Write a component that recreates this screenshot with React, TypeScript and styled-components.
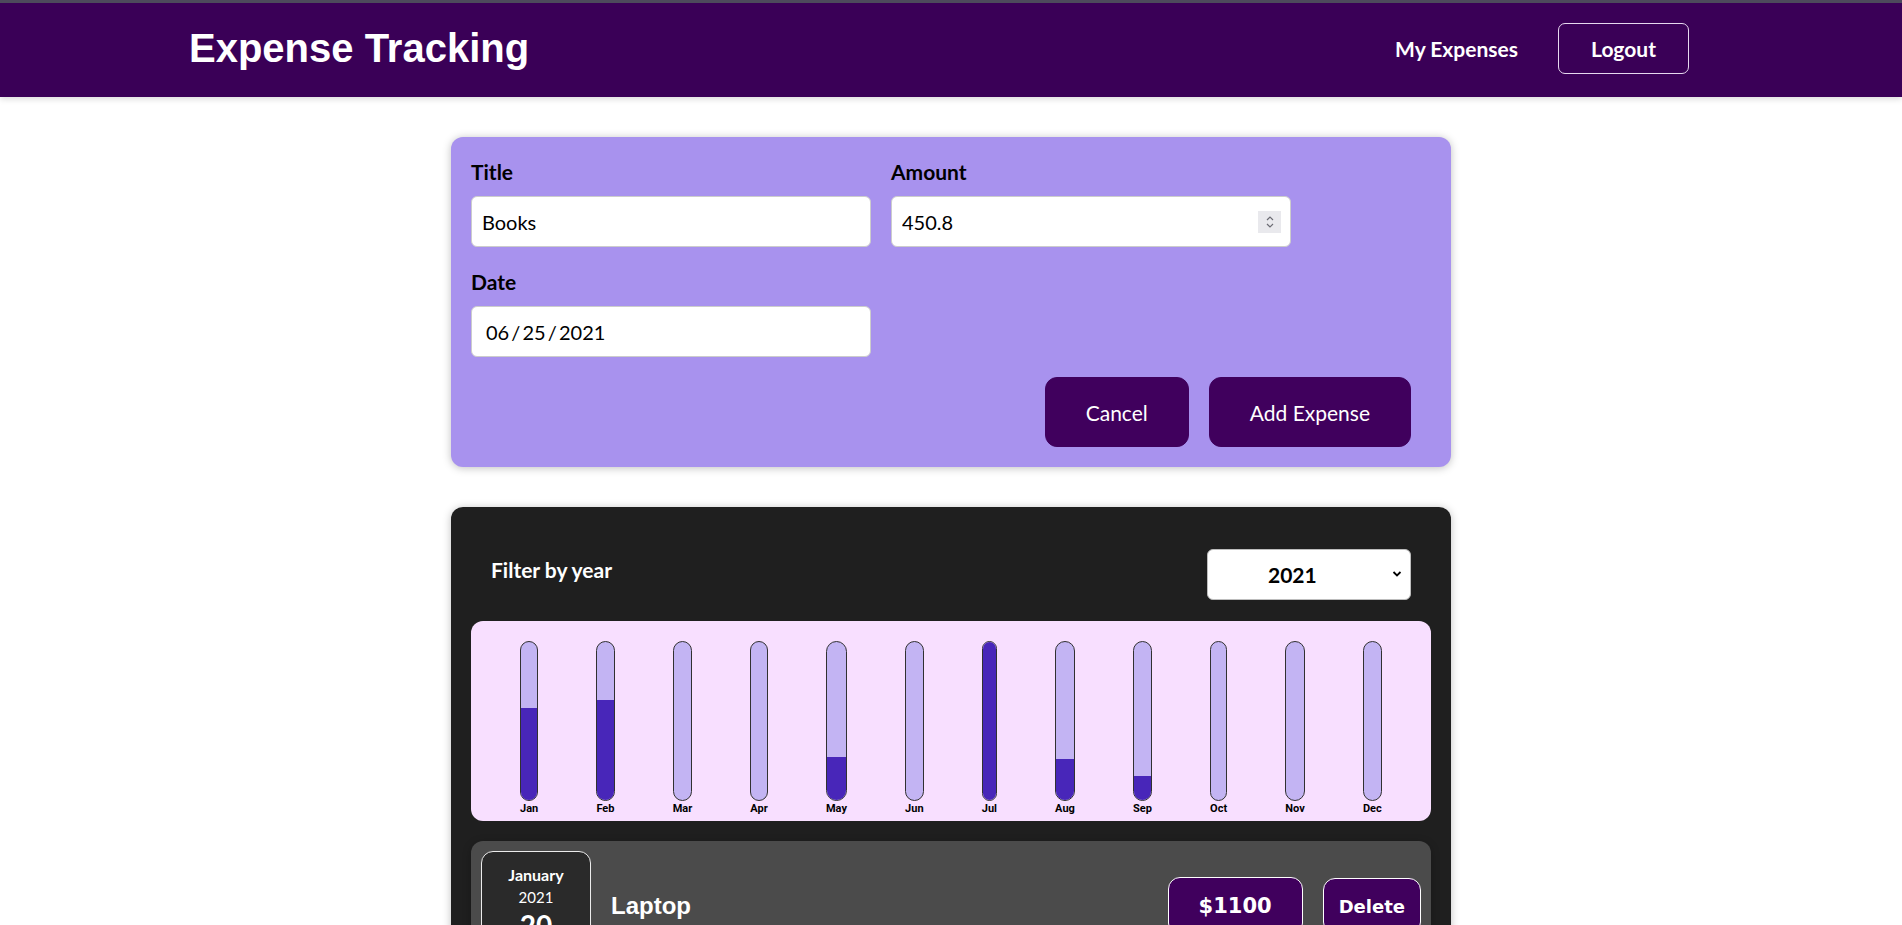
import React from "react";
import styled, { createGlobalStyle } from "styled-components";

const GlobalStyle = createGlobalStyle`
  * {
    box-sizing: border-box;
  }
  html {
    scrollbar-width: none;
  }
  html::-webkit-scrollbar {
    display: none;
  }
  body {
    margin: 0;
    background: #ffffff;
    font-family: "Lato", "Noto Sans", sans-serif;
  }
`;

const Header = styled.header`
  height: 97px;
  border-top: 3px solid #4d4a5c;
  background: #3a0057;
  box-shadow: 0 2px 6px rgba(0, 0, 0, 0.15);
  display: flex;
  align-items: center;
  justify-content: space-between;
  padding: 0 213px 4px 189px;
`;

const Brand = styled.h1`
  margin: 0;
  font-family: "Liberation Sans", Arial, sans-serif;
  font-size: 40px;
  font-weight: 700;
  color: #ffffff;
`;

const Nav = styled.nav`
  display: flex;
  align-items: center;
  gap: 40px;
`;

const NavLink = styled.a`
  color: #ffffff;
  font-size: 21px;
  font-weight: 700;
  text-decoration: none;
`;

const LogoutButton = styled.button`
  width: 131px;
  height: 51px;
  border: 1px solid #e6d8ef;
  border-radius: 7px;
  background: transparent;
  color: #ffffff;
  font-family: inherit;
  font-size: 21px;
  font-weight: 700;
`;

const Card = styled.section<{ $dark?: boolean }>`
  width: 1000px;
  margin: 40px auto;
  padding: 20px;
  border-radius: 12px;
  background: ${(p) => (p.$dark ? "#1f1f1f" : "#a892ee")};
  box-shadow: 0 1px 8px rgba(0, 0, 0, 0.25);
`;

const Controls = styled.div`
  display: flex;
  flex-wrap: wrap;
  gap: 20px;
  margin-bottom: 20px;
`;

const Control = styled.div`
  width: 400px;
`;

const Label = styled.label<{ $light?: boolean }>`
  display: block;
  margin-bottom: 10px;
  font-size: 21px;
  line-height: 29px;
  font-weight: 700;
  color: ${(p) => (p.$light ? "#ffffff" : "#000000")};
`;

const InputWrap = styled.div`
  position: relative;
`;

const Input = styled.input<{ $indent?: number }>`
  display: block;
  width: 400px;
  height: 51px;
  padding: 0 10px 0 ${(p) => p.$indent ?? 10}px;
  border: 1px solid #cccccc;
  border-radius: 6px;
  background: #ffffff;
  font-family: inherit;
  font-size: 20px;
  color: #000000;
`;

const DateInput = styled(Input)`
  word-spacing: -3px;
`;

const Spinner = styled.div`
  position: absolute;
  top: 15px;
  right: 10px;
  width: 23px;
  height: 22px;
  background: #e9e9ed;
  display: flex;
  align-items: center;
  justify-content: center;
`;

const Actions = styled.div`
  display: flex;
  justify-content: flex-end;
`;

const ActionButton = styled.button`
  height: 70px;
  margin-right: 20px;
  padding: 0 40px;
  border: 1px solid #40005d;
  border-radius: 12px;
  background: #40005d;
  color: #ffffff;
  font-family: inherit;
  font-size: 21px;
`;

const FilterBar = styled.div`
  display: flex;
  align-items: center;
  justify-content: space-between;
  margin: 22px 0 21px;
  padding: 0 20px;
`;

const SelectWrap = styled.div`
  position: relative;
`;

const Select = styled.select`
  display: block;
  width: 204px;
  height: 51px;
  padding: 0 0 0 60px;
  appearance: none;
  border: 1px solid #bdbdbd;
  border-radius: 6px;
  background: #ffffff;
  color: #000000;
  font-family: inherit;
  font-size: 21px;
  font-weight: 700;
`;

const SelectArrow = styled.svg`
  position: absolute;
  top: 20px;
  right: 8px;
  pointer-events: none;
`;

const Chart = styled.div`
  height: 200px;
  padding: 20px 20px 6px;
  border-radius: 12px;
  background: #f8dfff;
  display: flex;
  justify-content: space-around;
`;

const Bar = styled.div`
  height: 100%;
  display: flex;
  flex-direction: column;
  align-items: center;
`;

const BarTrack = styled.div`
  flex: 1;
  width: 100%;
  border: 1px solid #313131;
  border-radius: 12px;
  background: #c3b4f3;
  overflow: hidden;
  display: flex;
  flex-direction: column;
  justify-content: flex-end;
`;

const BarFill = styled.div`
  width: 100%;
  background: #4826b9;
`;

const BarLabel = styled.div`
  margin-top: 2px;
  font-family: Roboto, "Noto Sans", sans-serif;
  font-size: 11px;
  line-height: 12px;
  font-weight: 700;
  color: #000000;
`;

const ExpenseRow = styled.div`
  display: flex;
  align-items: center;
  margin-top: 20px;
  padding: 10px;
  border-radius: 12px;
  background: #4b4b4b;
  box-shadow: 0 2px 8px rgba(0, 0, 0, 0.25);
`;

const DateBox = styled.div`
  width: 110px;
  height: 110px;
  padding-top: 12px;
  border: 1px solid #ececec;
  border-radius: 12px;
  background: #2a2a2a;
  color: #ffffff;
  display: flex;
  flex-direction: column;
  align-items: center;
`;

const DateMonth = styled.div`
  font-size: 16px;
  line-height: 22px;
  font-weight: 700;
`;

const DateYear = styled.div`
  font-size: 15px;
  line-height: 22px;
`;

const DateDay = styled.div`
  font-size: 28px;
  line-height: 34px;
  font-weight: 700;
`;

const ExpenseTitle = styled.h2`
  flex: 1;
  margin: 0 20px;
  font-family: "Liberation Sans", Arial, sans-serif;
  font-size: 24px;
  font-weight: 700;
  color: #ffffff;
`;

const Pill = styled.div<{ $small?: boolean }>`
  height: ${(p) => (p.$small ? 56 : 58)}px;
  margin-left: ${(p) => (p.$small ? 20 : 0)}px;
  padding: 0 ${(p) => (p.$small ? 15 : 30)}px;
  border: 1px solid #ffffff;
  border-radius: 12px;
  background: #40005d;
  color: #ffffff;
  font-family: "DejaVu Sans", Verdana, sans-serif;
  font-size: ${(p) => (p.$small ? 18 : 21)}px;
  font-weight: 700;
  display: flex;
  align-items: center;
`;

const months = [
  { name: "Jan", value: 1100 },
  { name: "Feb", value: 1194 },
  { name: "Mar", value: 0 },
  { name: "Apr", value: 0 },
  { name: "May", value: 508 },
  { name: "Jun", value: 0 },
  { name: "Jul", value: 1880 },
  { name: "Aug", value: 489 },
  { name: "Sep", value: 282 },
  { name: "Oct", value: 0 },
  { name: "Nov", value: 0 },
  { name: "Dec", value: 0 },
];

const App = () => {
  const max = Math.max(...months.map((m) => m.value));

  return (
    <>
      <GlobalStyle />
      <Header>
        <Brand>Expense Tracking</Brand>
        <Nav>
          <NavLink href="#">My Expenses</NavLink>
          <LogoutButton>Logout</LogoutButton>
        </Nav>
      </Header>

      <Card>
        <Controls>
          <Control>
            <Label>Title</Label>
            <Input type="text" defaultValue="Books" />
          </Control>
          <Control>
            <Label>Amount</Label>
            <InputWrap>
              <Input type="text" defaultValue="450.8" />
              <Spinner>
                <svg width="10" height="16" viewBox="0 0 10 16" fill="none" stroke="#6b6b73" strokeWidth="1.2">
                  <polyline points="2,6 5,3 8,6" />
                  <polyline points="2,10 5,13 8,10" />
                </svg>
              </Spinner>
            </InputWrap>
          </Control>
          <Control>
            <Label>Date</Label>
            <DateInput type="text" defaultValue="06 / 25 / 2021" $indent={14} />
          </Control>
        </Controls>
        <Actions>
          <ActionButton>Cancel</ActionButton>
          <ActionButton>Add Expense</ActionButton>
        </Actions>
      </Card>

      <Card $dark>
        <FilterBar>
          <Label $light>Filter by year</Label>
          <SelectWrap>
            <Select defaultValue="2021">
              <option value="2022">2022</option>
              <option value="2021">2021</option>
              <option value="2020">2020</option>
              <option value="2019">2019</option>
            </Select>
            <SelectArrow width="12" height="10" viewBox="0 0 12 10" fill="none" stroke="#000" strokeWidth="1.8">
              <polyline points="2.5,3 6,6.5 9.5,3" />
            </SelectArrow>
          </SelectWrap>
        </FilterBar>

        <Chart>
          {months.map((m) => (
            <Bar key={m.name}>
              <BarTrack>
                <BarFill style={{ height: `${max > 0 ? (m.value / max) * 100 : 0}%` }} />
              </BarTrack>
              <BarLabel>{m.name}</BarLabel>
            </Bar>
          ))}
        </Chart>

        <ExpenseRow>
          <DateBox>
            <DateMonth>January</DateMonth>
            <DateYear>2021</DateYear>
            <DateDay>20</DateDay>
          </DateBox>
          <ExpenseTitle>Laptop</ExpenseTitle>
          <Pill>$1100</Pill>
          <Pill as="button" $small>
            Delete
          </Pill>
        </ExpenseRow>
      </Card>
    </>
  );
};

export default App;
